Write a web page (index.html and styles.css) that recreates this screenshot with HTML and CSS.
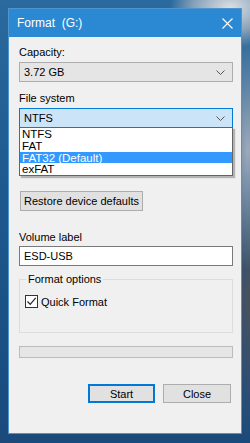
FILE: index.html
```html
<!DOCTYPE html>
<html>
<head>
<meta charset="utf-8">
<link rel="stylesheet" href="styles.css">
</head>
<body>
<div class="desktop">
  <div class="window">
    <div class="titlebar">
      <span class="title">Format&nbsp; (G:)</span>
      <svg class="close" width="11" height="11" viewBox="0 0 11 11"><path d="M0.5 0.5 L10.5 10.5 M10.5 0.5 L0.5 10.5" stroke="#fff" stroke-width="1.1" fill="none"/></svg>
    </div>
    <div class="content">
      <div class="label lbl-capacity">Capacity:</div>
      <div class="combo">
        <span>3.72 GB</span>
        <svg class="chev" width="9" height="5" viewBox="0 0 9 5"><path d="M0.5 0.5 L4.5 4.5 L8.5 0.5" stroke="#555" fill="none"/></svg>
      </div>
      <div class="label lbl-fs">File system</div>
      <div class="combo-wrap">
        <div class="combo combo-focus">
          <span>NTFS</span>
          <svg class="chev" width="9" height="5" viewBox="0 0 9 5"><path d="M0.5 0.5 L4.5 4.5 L8.5 0.5" stroke="#555" fill="none"/></svg>
        </div>
        <div class="dropdown">
          <div class="opt">NTFS</div>
          <div class="opt">FAT</div>
          <div class="opt sel">FAT32 (Default)</div>
          <div class="opt">exFAT</div>
        </div>
      </div>
      <div class="spacer-dd"></div>
      <button class="btn btn-restore">Restore device defaults</button>
      <div class="label lbl-vol">Volume label</div>
      <div class="textbox">ESD-USB</div>
      <fieldset class="group">
        <legend>Format options</legend>
        <label class="check"><span class="box"><svg width="11" height="11" viewBox="0 0 11 11"><path d="M1.5 5.5 L4.2 8.3 L9.7 1.8" stroke="#222" stroke-width="1.2" fill="none"/></svg></span>Quick Format</label>
      </fieldset>
      <div class="progress"></div>
      <div class="actions">
        <button class="btn btn-start">Start</button>
        <button class="btn btn-close">Close</button>
      </div>
    </div>
  </div>
</div>
</body>
</html>
```
FILE: styles.css
```css
* { box-sizing: border-box; }
html, body { margin: 0; padding: 0; }
body {
  width: 250px;
  height: 443px;
  overflow: hidden;
  font-family: "Liberation Sans", Arial, sans-serif;
  font-size: 11px;
  color: #000;
}
.desktop {
  width: 250px;
  height: 443px;
  padding: 8px 0 0 8px;
  background:
    radial-gradient(ellipse 60px 40px at 230px 8px, rgba(230,230,232,0.95), rgba(200,200,205,0.6) 60%, rgba(150,150,160,0) 100%),
    radial-gradient(ellipse 30px 120px at 248px 150px, rgba(190,190,195,0.8), rgba(120,120,130,0) 100%),
    radial-gradient(ellipse 20px 140px at 248px 300px, rgba(80,80,90,0.9), rgba(60,60,70,0) 100%),
    linear-gradient(180deg, #2a6a9e 0%, #1e5a8e 40%, #1a4f82 80%, #1b4a7a 100%);
}
.window {
  width: 234px;
  height: 426px;
  border: 1px solid #4f93cf;
  background: #f0f0f0;
  display: flex;
  flex-direction: column;
}
.titlebar {
  height: 28px;
  background: #2b88d2;
  color: #fff;
  display: flex;
  align-items: center;
  justify-content: space-between;
  padding: 0 8px 1px 8px;
  font-size: 12px;
  flex: none;
}
.close { margin-top: 1px; }
.content {
  padding: 8px 8px 0 10px;
  display: flex;
  flex-direction: column;
  position: relative;
}
.label { line-height: 15px; height: 15px; white-space: nowrap; }
.combo {
  margin-top: 2px;
  height: 20px;
  border: 1px solid #adadad;
  background: #e5e5e5;
  display: flex;
  align-items: center;
  justify-content: space-between;
  padding: 0 7px 0 4px;
}
.lbl-fs { margin-top: 9px; }
.combo-wrap { position: relative; }
.combo-focus {
  border-color: #0078d7;
  background: #cce4f7;
}
.dropdown {
  position: absolute;
  left: 0;
  top: 21px;
  width: 214px;
  height: 49px;
  background: #fff;
  border: 1px solid #646464;
  box-shadow: 2px 2px 1px rgba(0,0,0,0.25);
  z-index: 2;
}
.opt {
  height: 11.75px;
  line-height: 12px;
  padding-left: 2px;
  font-size: 11.5px;
  white-space: nowrap;
}
.opt.sel { background: #3399ff; color: #fff; }
.spacer-dd { height: 63px; flex: none; }
.btn {
  font-family: inherit;
  font-size: 11px;
  height: 20px;
  border: 1px solid #adadad;
  background: #e1e1e1;
  color: #000;
  padding: 0;
  white-space: nowrap;
}
.btn-restore {
  width: 123px;
  margin-left: 1px;
  align-self: flex-start;
}
.lbl-vol { margin-top: 19px; }
.textbox {
  margin-top: 1px;
  height: 20px;
  border: 1px solid #7a7a7a;
  background: #fff;
  line-height: 18px;
  padding-left: 4px;
}
.group {
  margin: 6px 0 0 0;
  height: 61px;
  border: 1px solid #dcdcdc;
  border-radius: 0;
  padding: 0 6px;
}
.group legend {
  padding: 0 2px;
  line-height: 14px;
}
.check {
  display: flex;
  align-items: center;
  margin-top: 9px;
  margin-left: -1px;
}
.box {
  width: 13px;
  height: 13px;
  border: 1px solid #333;
  background: #fff;
  display: flex;
  align-items: center;
  justify-content: center;
  margin-right: 3px;
}
.progress {
  margin-top: 13px;
  height: 12px;
  border: 1px solid #bcbcbc;
  background: #e6e6e6;
}
.actions {
  display: flex;
  justify-content: flex-end;
  gap: 8px;
  margin-top: 26px;
  padding-right: 2px;
}
.btn-start {
  width: 67px;
  height: 19px;
  border: 1px solid #0078d7;
  box-shadow: inset 0 0 0 1px #0078d7;
}
.btn-close {
  width: 68px;
  height: 19px;
}
```
